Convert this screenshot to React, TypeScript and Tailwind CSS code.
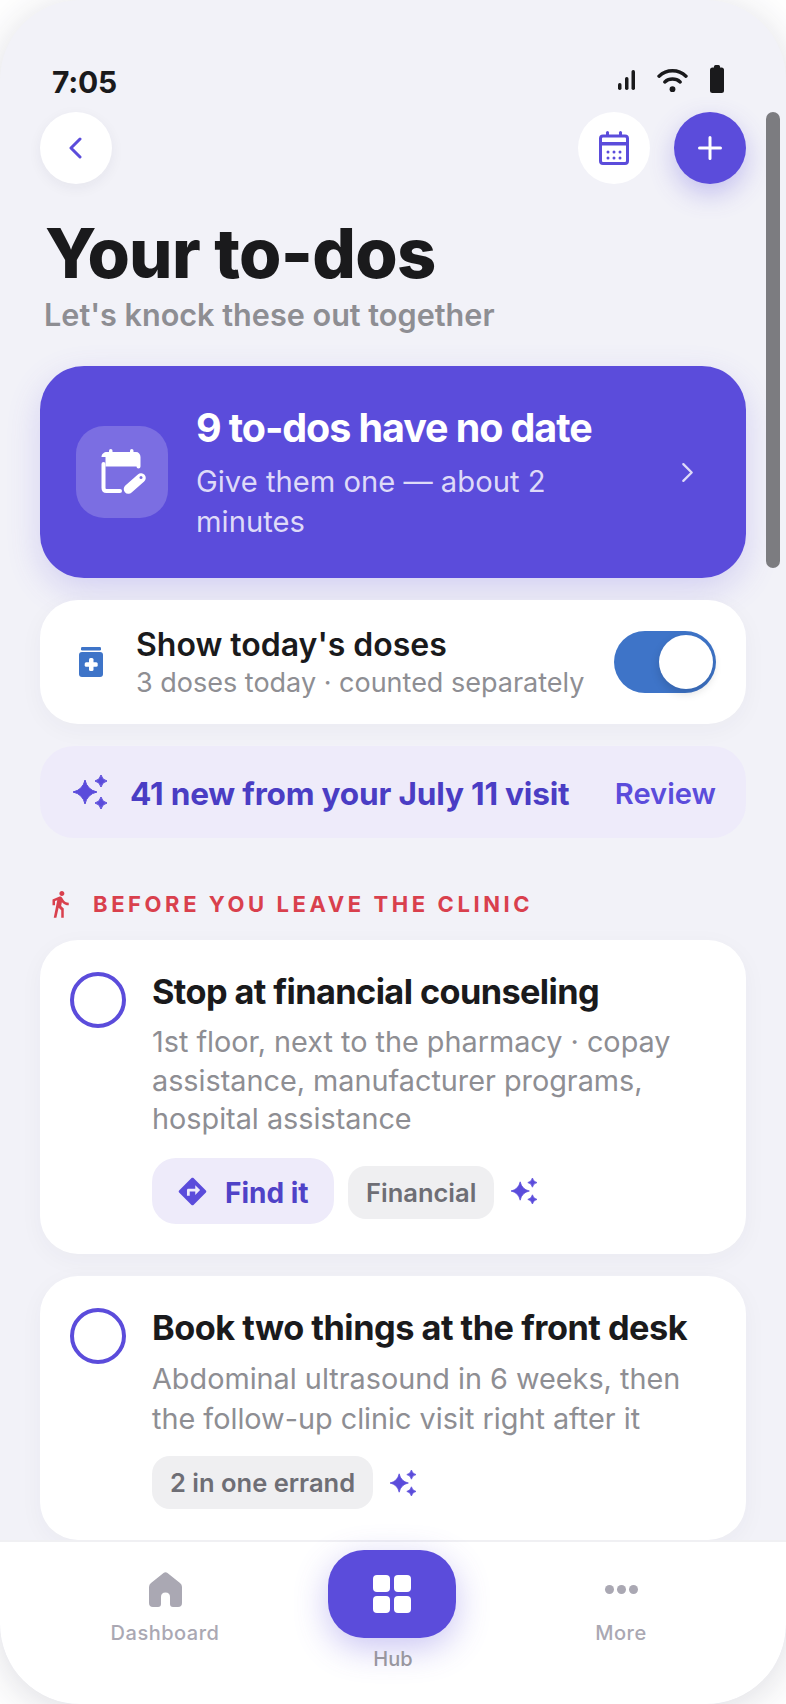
import React from "react";

const star = (cx: number, cy: number, r: number) => {
  const k = r * 0.18;
  return `M${cx} ${cy - r}Q${cx + k} ${cy - k} ${cx + r} ${cy}Q${cx + k} ${cy + k} ${cx} ${cy + r}Q${cx - k} ${cy + k} ${cx - r} ${cy}Q${cx - k} ${cy - k} ${cx} ${cy - r}Z`;
};

function Sparkle({ className }: { className: string }) {
  return (
    <svg viewBox="0 0 34 34" className={className} fill="#5b4cdb">
      <path d={star(12, 17, 12)} stroke="#5b4cdb" strokeWidth="1" strokeLinejoin="round" />
      <path d={star(28, 6, 6)} stroke="#5b4cdb" strokeWidth="1" strokeLinejoin="round" />
      <path d={star(28, 28, 6)} stroke="#5b4cdb" strokeWidth="1" strokeLinejoin="round" />
    </svg>
  );
}

function CalendarGrid() {
  const dots = [
    [9, 21], [15, 21], [21, 21],
    [9, 27], [15, 27], [21, 27],
  ];
  return (
    <svg viewBox="0 0 30 34" className="h-[34px] w-[30px]" fill="#5b4cdb">
      <rect x="1.500" y="5" width="27" height="27.500" rx="2.500" fill="none" stroke="#5b4cdb" strokeWidth="3" />
      <rect x="7" y="0" width="3" height="6" rx="1.500" />
      <rect x="20" y="0" width="3" height="6" rx="1.500" />
      <rect x="2" y="11" width="26" height="3.500" />
      {dots.map(([x, y]) => (
        <circle key={`${x}-${y}`} cx={x} cy={y} r="1.500" />
      ))}
    </svg>
  );
}

function CalendarEdit() {
  return (
    <svg viewBox="0 0 46 46" className="ml-[4px] h-[46px] w-[46px]" fill="white">
      <rect x="8" y="0" width="3.500" height="8" rx="1.750" />
      <rect x="29" y="0" width="3.500" height="8" rx="1.750" />
      <path d="M0.500 8C0.500 5 3 3 6 3H35C37.500 3 39.500 5 39.500 8V17.500Q39.500 19.500 37.500 19.500Q35.500 19.500 35.500 17.500H4.500V8Z" />
      <path d="M2.500 15V39C2.500 41 3.500 42 5.500 42H19" fill="none" stroke="white" strokeWidth="4" strokeLinecap="round" />
      <path d="M27.500 40L40 29" fill="none" stroke="white" strokeWidth="9.500" strokeLinecap="round" />
      <circle cx="40" cy="28.500" r="1.500" fill="#7b6ee2" />
    </svg>
  );
}

function Bottle() {
  return (
    <svg viewBox="0 0 24 30" className="h-[30px] w-[24px]" fill="#3e74c8">
      <rect x="2" y="0" width="20" height="3.500" rx="1.200" />
      <rect x="0" y="5" width="24" height="25" rx="3" />
      <rect x="10" y="11" width="4.500" height="13" rx="1.500" fill="white" />
      <rect x="5.700" y="15.200" width="13" height="4.500" rx="1.500" fill="white" />
    </svg>
  );
}

function Check() {
  return <div className="h-[56px] w-[56px] shrink-0 rounded-full border-[4px] border-[#5b4cdb]" />;
}

function Tag({ children }: { children: React.ReactNode }) {
  return (
    <div className="flex h-[53px] items-center rounded-[18px] bg-[#efeff1] px-[18px] pt-[2px] text-[25.500px] font-semibold text-[#6e6e75]">
      {children}
    </div>
  );
}

export default function App() {
  return (
    <div className="h-[1704px] w-[786px] bg-white font-['Inter',sans-serif]">
      <div className="relative flex h-[1704px] w-[786px] flex-col overflow-hidden rounded-[80px] bg-[#f2f2f8] shadow-[0_6px_40px_rgba(40,40,70,0.16)]">
        <div className="flex h-[112px] shrink-0 items-start justify-between pl-[52px] pr-[62px] pt-[64px]">
          <span className="text-[30px] leading-[36px] font-bold tracking-[-0.2px] text-[#1a1a1c]">7:05</span>
          <div className="flex items-center gap-[22px] pt-[1px]">
            <svg viewBox="0 0 17 20" className="mt-[2px] h-[20px] w-[17px]" fill="#1a1a1c">
              <rect x="0" y="13" width="3.500" height="7" rx="1.700" />
              <rect x="7" y="7" width="3.500" height="13" rx="1.700" />
              <rect x="13.500" y="0" width="3.500" height="20" rx="1.700" />
            </svg>
            <svg viewBox="0 0 32 26" className="mt-[2px] h-[25px] w-[31px]" fill="none" stroke="#1a1a1c" strokeWidth="3.600" strokeLinecap="round">
              <path d="M2 8.500C10 1 22 1 30 8.500" />
              <path d="M8 14.500C12.500 10.500 19.500 10.500 24 14.500" />
              <circle cx="16" cy="22" r="3" fill="#1a1a1c" stroke="none" />
            </svg>
            <svg viewBox="0 0 14 28" className="h-[28px] w-[14px]" fill="#1a1a1c">
              <rect x="4" y="0" width="6" height="4" rx="1.500" />
              <rect x="0" y="2.500" width="14" height="25.500" rx="2.500" />
            </svg>
          </div>
        </div>

        <div className="flex shrink-0 items-center justify-between px-[40px]">
          <div className="flex h-[72px] w-[72px] items-center justify-center rounded-full bg-white pr-[3px] shadow-[0_4px_14px_rgba(40,40,70,0.06)]">
            <svg viewBox="0 0 14 22" className="h-[22px] w-[14px]" fill="none" stroke="#5b4cdb" strokeWidth="3" strokeLinecap="round" strokeLinejoin="round">
              <path d="M12 2L3 11L12 20" />
            </svg>
          </div>
          <div className="flex items-center gap-[24px]">
            <div className="flex h-[72px] w-[72px] items-center justify-center rounded-full bg-white">
              <CalendarGrid />
            </div>
            <div className="flex h-[72px] w-[72px] items-center justify-center rounded-full bg-[#5b4cdb] shadow-[0_10px_26px_rgba(91,76,219,0.3)]">
              <svg viewBox="0 0 24 24" className="h-[24px] w-[24px]" fill="none" stroke="white" strokeWidth="3" strokeLinecap="round">
                <path d="M12 1.500V22.500M1.500 12H22.500" />
              </svg>
            </div>
          </div>
        </div>

        <div className="min-h-0 flex-1 overflow-hidden px-[40px]">
          <h1 className="mt-[32px] ml-[5px] text-[68.500px] leading-[76px] font-extrabold tracking-[-0.7px] text-[#1a1a1c]">Your to-dos</h1>
          <p className="mt-[4px] ml-[4px] text-[30.600px] leading-[38px] font-semibold text-[#8e8e93]">Let's knock these out together</p>

          <div className="mt-[32px] flex h-[212px] items-center rounded-[44px] bg-[#5b4cdb] pl-[36px] pr-[52px] shadow-[0_12px_34px_rgba(91,76,219,0.2)]">
            <div className="flex h-[92px] w-[92px] shrink-0 items-center justify-center rounded-[28px] bg-[#7b6ee2]">
              <CalendarEdit />
            </div>
            <div className="ml-[28px] min-w-0 flex-1 pt-[3px]">
              <div className="text-[39.500px] leading-[46px] font-bold tracking-[-1.100px] text-white">9 to-dos have no date</div>
              <div className="mt-[11px] w-[400px] text-[29.200px] leading-[40px] text-[#dedaf8]">Give them one — about 2 minutes</div>
            </div>
            <svg viewBox="0 0 14 22" className="h-[21px] w-[13px] shrink-0" fill="none" stroke="#dedaf8" strokeWidth="2.500" strokeLinecap="round" strokeLinejoin="round">
              <path d="M2.500 2L11.500 11L2.500 20" />
            </svg>
          </div>

          <div className="mt-[22px] flex h-[124px] items-center rounded-[38px] bg-white pl-[39px] pr-[30px] shadow-[0_6px_24px_rgba(40,40,70,0.04)]">
            <Bottle />
            <div className="ml-[33px] min-w-0 flex-1 pt-[2px]">
              <div className="text-[32px] leading-[40px] font-semibold text-[#1a1a1c]">Show today's doses</div>
              <div className="text-[27px] leading-[36px] whitespace-nowrap text-[#8e8e93]">3 doses today · counted separately</div>
            </div>
            <div className="flex h-[62px] w-[102px] shrink-0 items-center justify-end rounded-full bg-[#3e74c8] pr-[3px]">
              <div className="h-[54px] w-[54px] rounded-full bg-white shadow-[0_4px_10px_rgba(0,0,0,0.15)]" />
            </div>
          </div>

          <div className="mt-[22px] flex h-[92px] items-center rounded-[34px] bg-[#eeebfa] pl-[33px] pr-[30px]">
            <Sparkle className="h-[34px] w-[34px] shrink-0" />
            <span className="ml-[23px] flex-1 pt-[3px] text-[31.600px] font-bold tracking-[-0.2px] whitespace-nowrap text-[#4a3dc4]">41 new from your July 11 visit</span>
            <span className="pt-[3px] text-[29.100px] font-semibold text-[#5b4cdb]">Review</span>
          </div>

          <div className="mt-[50px] flex h-[32px] items-center pl-[6px]">
            <svg viewBox="0 0 24 24" className="h-[30px] w-[30px] shrink-0 -ml-[1px]" fill="#d9404d">
              <path d="M13.500 5.500c1.100 0 2-.9 2-2s-.9-2-2-2-2 .9-2 2 .9 2 2 2zM9.800 8.900L7 23h2.100l1.800-8 2.100 2v6h2v-7.500l-2.100-2 .6-3C14.800 12 16.800 13 19 13v-2c-1.900 0-3.500-1-4.300-2.400l-1-1.600c-.4-.6-1-1-1.700-1-.3 0-.5.1-.8.1L6 8.300V13h2V9.600l1.800-.7" />
            </svg>
            <span className="ml-[18px] text-[22px] font-bold tracking-[3.580px] text-[#d9404d]">BEFORE YOU LEAVE THE CLINIC</span>
          </div>

          <div className="mt-[20px] flex h-[314px] rounded-[38px] bg-white pl-[30px] pr-[24px] pt-[32px] shadow-[0_6px_24px_rgba(40,40,70,0.04)]">
            <Check />
            <div className="ml-[26px] min-w-0 flex-1">
              <div className="pt-[1px] text-[34.300px] leading-[38px] font-bold tracking-[-0.6px] whitespace-nowrap text-[#1a1a1c]">Stop at financial counseling</div>
              <div className="mt-[12px] text-[28.800px] leading-[38.500px] text-[#8e8e93]">1st floor, next to the pharmacy · copay assistance, manufacturer programs, hospital assistance</div>
              <div className="mt-[19.500px] flex items-center">
                <div className="flex h-[66px] w-[182px] items-center rounded-[24px] bg-[#eeebfa] pl-[26px]">
                  <svg viewBox="1.500 1.500 21 21" className="h-[29px] w-[29px] shrink-0" fill="#5b4cdb">
                    <path d="M21.710 11.290l-9-9c-.39-.39-1.020-.39-1.410 0l-9 9c-.39.39-.39 1.020 0 1.410l9 9c.39.39 1.020.39 1.410 0l9-9c.39-.38.39-1.010 0-1.410zM14 14.500V12h-4v3H8v-4c0-.55.45-1 1-1h5V7.500l3.500 3.500-3.500 3.500z" />
                  </svg>
                  <span className="ml-[18px] pt-[3px] text-[28px] font-bold text-[#4f42c7]">Find it</span>
                </div>
                <div className="ml-[14px] mt-[2px]"><Tag>Financial</Tag></div>
                <Sparkle className="ml-[17px] h-[26px] w-[26px]" />
              </div>
            </div>
          </div>

          <div className="mt-[22px] flex h-[264px] rounded-[38px] bg-white pl-[30px] pr-[24px] pt-[32px] shadow-[0_6px_24px_rgba(40,40,70,0.04)]">
            <Check />
            <div className="ml-[26px] min-w-0 flex-1">
              <div className="pt-[1px] text-[34.300px] leading-[38px] font-bold tracking-[-0.5px] whitespace-nowrap text-[#1a1a1c]">Book two things at the front desk</div>
              <div className="mt-[12px] text-[28.800px] leading-[39.500px] text-[#8e8e93]">Abdominal ultrasound in 6 weeks, then the follow-up clinic visit right after it</div>
              <div className="mt-[18px] flex items-center">
                <Tag>2 in one errand</Tag>
                <Sparkle className="ml-[17px] h-[26px] w-[26px]" />
              </div>
            </div>
          </div>
        </div>

        <div className="grid h-[164px] shrink-0 grid-cols-3 rounded-b-[80px] border-t-2 border-[#f0f0f3] bg-white px-[51px]">
          <div className="flex flex-col items-center pt-[30px]">
            <svg viewBox="0 0 33 35" className="h-[35px] w-[33px]" fill="#aaa8b3">
              <path d="M14.500 1Q16.500 -.5 18.500 1L31 11Q33 12.500 33 15V31Q33 35 29 35H24Q21 35 21 32V25Q21 20.500 16.500 20.500Q12 20.500 12 25V32Q12 35 9 35H4Q0 35 0 31V15Q0 12.500 2 11Z" />
            </svg>
            <span className="mt-[14px] text-[20px] leading-[24px] font-medium tracking-[0.5px] text-[#aaa8b3]">Dashboard</span>
          </div>
          <div className="flex flex-col items-center pt-[8px]">
            <div className="mr-[2px] flex h-[88px] w-[128px] items-center justify-center rounded-[36px] bg-[#5b4cdb] shadow-[0_10px_34px_rgba(91,76,219,0.32)]">
              <div className="grid grid-cols-[17px_17px] gap-[4px]">
                <div className="h-[17px] rounded-[4px] bg-white" />
                <div className="h-[17px] rounded-[4px] bg-white" />
                <div className="h-[17px] rounded-[4px] bg-white" />
                <div className="h-[17px] rounded-[4px] bg-white" />
              </div>
            </div>
            <span className="mt-[9px] text-[20px] leading-[24px] font-medium text-[#98969f]">Hub</span>
          </div>
          <div className="flex flex-col items-center pt-[30px]">
            <div className="flex h-[35px] items-center gap-[3px]">
              <div className="h-[9px] w-[9px] rounded-full bg-[#aaa8b3]" />
              <div className="h-[9px] w-[9px] rounded-full bg-[#aaa8b3]" />
              <div className="h-[9px] w-[9px] rounded-full bg-[#aaa8b3]" />
            </div>
            <span className="mt-[14px] text-[20px] leading-[24px] font-medium tracking-[0.5px] text-[#aaa8b3]">More</span>
          </div>
        </div>

        <div className="absolute left-[766px] top-[112px] h-[456px] w-[14px] rounded-full bg-[#7c7c80]" />
      </div>
    </div>
  );
}
